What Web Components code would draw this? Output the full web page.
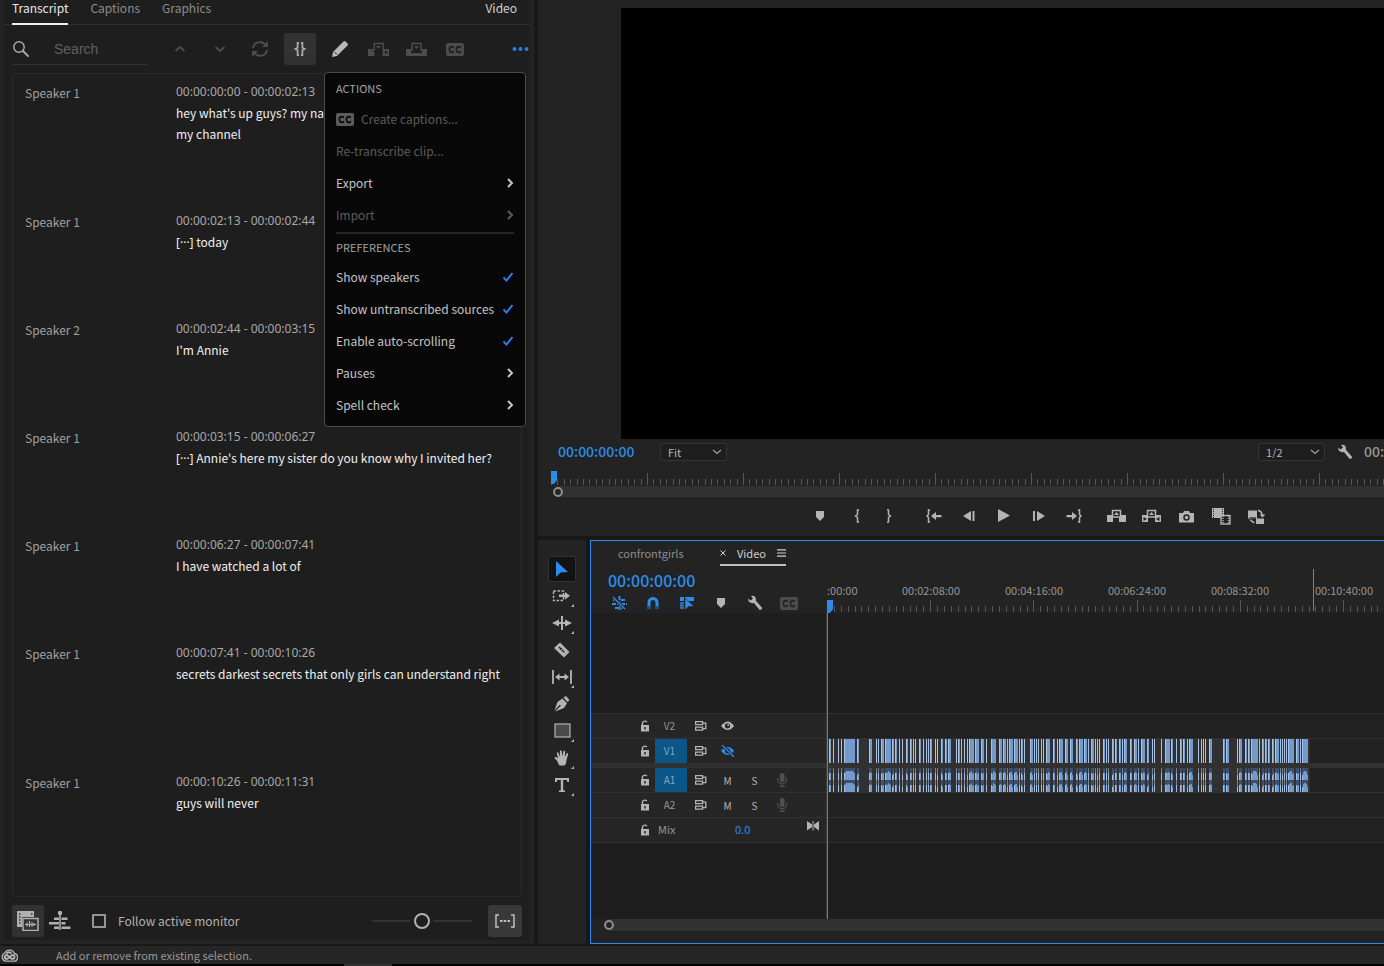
<!DOCTYPE html>
<html lang="en">
<head>
<meta charset="utf-8">
<title>Video editor</title>
<style>
html,body{margin:0;padding:0;background:#181818}
body{font-family:"Noto Sans CJK SC","Noto Sans",sans-serif;font-size:12px;color:#b4b4b4}
</style>
</head>
<body>
<editor-app></editor-app>
<script>
const RESET = `*,*::before,*::after{box-sizing:border-box}
button,input,select{font:inherit;color:inherit;background:none;border:0;margin:0;padding:0;border-radius:0}
button{display:flex;align-items:center;justify-content:center}
:host([hidden]){display:none}`;

function define(name, css, html, setup) {
  const template = document.createElement('template');
  template.innerHTML = `<style>${RESET}${css}</style>${html}`;
  customElements.define(name, class extends HTMLElement {
    constructor() {
      super();
      this.attachShadow({ mode: 'open' }).append(template.content.cloneNode(true));
    }
    connectedCallback() { if (setup) setup(this, this.shadowRoot); }
  });
}

/* Icons: [width, height, markup]; strokes and fills use currentColor. */
const ICONS = {
  search: [18, 18, '<circle cx="7" cy="7" r="5.2" fill="none" stroke="currentColor" stroke-width="1.5"/><path d="M11 11l5 5" stroke="currentColor" stroke-width="2" stroke-linecap="round"/>'],
  up: [12, 8, '<path d="M1.5 6L6 2l4.500 4" fill="none" stroke="currentColor" stroke-width="1.800"/>'],
  down: [12, 8, '<path d="M1.500 2L6 6l4.500-4" fill="none" stroke="currentColor" stroke-width="1.800"/>'],
  caret: [10, 6, '<path d="M1 1l4 3.500L9 1" fill="none" stroke="currentColor" stroke-width="1.200"/>'],
  right: [8, 12, '<path d="M2 2l4 4-4 4" fill="none" stroke="currentColor" stroke-width="2"/>'],
  check: [12, 10, '<path d="M1.500 5.500l3 3L10.500 1" fill="none" stroke="currentColor" stroke-width="2"/>'],
  refresh: [18, 18, '<path d="M2 8a7 7 0 0 1 12.500-3M16 10A7 7 0 0 1 3.500 13" fill="none" stroke="currentColor" stroke-width="2"/><path d="M17 1v6h-6zM1 17v-6h6z" fill="currentColor"/>'],
  braces: [12, 14, '<path d="M5 1H3.600v4.700L1.500 7l2.100 1.300V13H5M7 1h1.400v4.700L10.500 7 8.400 8.300V13H7" fill="none" stroke="currentColor" stroke-width="1.800"/>'],
  pencil: [18, 18, '<path d="M2 12L12.500 1.500q1-1 2 0l2 2q1 1 0 2L6 16l-5 1z" fill="currentColor"/><path d="M3.500 12l2.500 2.500" stroke="#1e1e1e" stroke-width="1"/>'],
  insert: [22, 15, '<path d="M0 7h5V10h10V7h6v7H0z" fill="currentColor"/><path d="M6.200 9V1.500h9V9" fill="none" stroke="currentColor" stroke-width="1.500"/><path d="M8 4h5l-2.500 3z" fill="currentColor"/><path d="M6.500 10h8v5h-8z" fill="var(--back,#1e1e1e)"/><path d="M17 8.500v4l3-2z" fill="var(--back,#1e1e1e)"/>'],
  overwrite: [22, 15, '<path d="M0 7h5V10h11V7h5v7H0z" fill="currentColor"/><path d="M6 9V1.500h9V9" fill="none" stroke="currentColor" stroke-width="1.500"/><path d="M8 4h5l-2.500 3z" fill="currentColor"/><path d="M5 10.500h11" stroke="#1e1e1e" stroke-width="1"/>'],
  cc: [18, 13, '<rect width="18" height="13" rx="2" fill="currentColor"/><path d="M8 4.500Q5.500 2.800 4 4.300q-1.500 2.200 0 4.400Q5.500 10.200 8 8.500M15 4.500Q12.500 2.800 11 4.300q-1.500 2.200 0 4.400 1.500 1.500 4-.2" fill="none" stroke="var(--back,#1e1e1e)" stroke-width="1.700"/>'],
  dots: [17, 6, '<g fill="currentColor"><circle cx="2.500" cy="3" r="2"/><circle cx="8.500" cy="3" r="2"/><circle cx="14.500" cy="3" r="2"/></g>'],
  source: [22, 20, '<path d="M0 0h17v6H5v10H0z" fill="currentColor"/><path d="M2 3h1.500M2 6h1.500M2 9h1.500M2 12h1.500M14 3h1.500" stroke="#323232" stroke-width="1.500"/><rect x="6" y="7.500" width="15" height="12" fill="#323232" stroke="currentColor" stroke-width="1.500"/><path d="M8 13.500h11M10 11.500v4M12.500 10v6M15 11v5M17 12v3" stroke="currentColor" stroke-width="1.200"/>'],
  sequence: [22, 20, '<path d="M11 1v18" stroke="currentColor" stroke-width="1.500"/><circle cx="11" cy="2" r="2.200" fill="currentColor"/><path d="M5 6.500h5V9H5zM12.500 6.500h6V9h-6zM0 11h10v2.500H0zM12.500 11h4v2.500h-4zM5 15.500h5V18H5zM12.500 15.500h9V18h-9z" fill="currentColor"/>'],
  pauses: [20, 14, '<path d="M4 1H1v12h3M16 1h3v12h-3" fill="none" stroke="currentColor" stroke-width="1.500"/><path d="M5 7h2.500M8.700 7h2.500M12.500 7H15" stroke="currentColor" stroke-width="2.200"/>'],
  cloud: [17, 13, '<path d="M5 12.200A4.300 4.300 0 0 1 3.800 4 5.400 5.400 0 0 1 13.500 4.500 3.900 3.900 0 0 1 12.500 12.200z" fill="none" stroke="currentColor" stroke-width="1.300"/><path d="M8 8.500Q5.500 10.800 4 9.200 2.800 6.500 6 6l4.500 3.700q3 .5 3-1.700T11.500 6L8 8.500M5.500 4.500Q8 1.800 10.500 4.500" fill="none" stroke="currentColor" stroke-width="2"/>'],
  wrench: [16, 16, '<path d="M1 3.500l2.500 2L6 3.500 4 1Q8-.5 9 4l-.3 1.500 6.500 7.500q-.5 2-2.500 2L7 8Q1.500 9 1 3.500z" fill="currentColor"/>'],
  marker: [10, 11, '<path d="M1 0h8v6L5 10 1 6z" fill="currentColor"/>'],
  open: [8, 14, '<path d="M6 1H4.500v4.500L2.500 7l2 1.500V13H6" fill="none" stroke="currentColor" stroke-width="1.500"/>'],
  close: [8, 14, '<path d="M2 1h1.500v4.500l2 1.500-2 1.500V13H2" fill="none" stroke="currentColor" stroke-width="1.500"/>'],
  toin: [16, 14, '<path d="M4 1H2.500v4.500L1 7l1.500 1.500V13H4" fill="none" stroke="currentColor" stroke-width="1.500"/><path d="M5 7l5-4v3h5.500v2.200H10V11z" fill="currentColor"/>'],
  toout: [16, 14, '<path d="M12 1h1.500v4.500L15 7l-1.500 1.500V13H12" fill="none" stroke="currentColor" stroke-width="1.500"/><path d="M11 7L6 3v3H.5v2.200H6V11z" fill="currentColor"/>'],
  stepback: [14, 12, '<path d="M9 1v10L1 6zM10.500 1h2v10h-2z" fill="currentColor"/>'],
  stepfwd: [14, 12, '<path d="M5 1v10l8-5zM1 1h2v10H1z" fill="currentColor"/>'],
  play: [14, 14, '<path d="M1 0v13l12-6.500z" fill="currentColor"/>'],
  lift: [20, 14, '<path d="M0 6h6v7H0zM12 6h7v7h-7z" fill="currentColor"/><path d="M5.500 8V1.500h8V8z" fill="#232323" stroke="currentColor" stroke-width="1.500"/><path d="M7 6h5L9.500 3z" fill="currentColor"/>'],
  extract: [20, 14, '<path d="M0 6h6v7H0zM13 6h6v7h-6z" fill="currentColor"/><path d="M5.500 8V1.500h8V8z" fill="#232323" stroke="currentColor" stroke-width="1.500"/><path d="M7 6h5L9.500 3z" fill="currentColor"/><path d="M1.500 8v4L5 10zM17.500 8v4L14 10z" fill="#232323"/>'],
  camera: [15, 13, '<path d="M0 3h4l1-2h5l1 2h4v9.500H0z" fill="currentColor"/><circle cx="7.500" cy="7.500" r="2.500" fill="none" stroke="#232323" stroke-width="1.500"/>'],
  compare: [20, 17, '<path d="M0 0h12v10H0z" fill="currentColor"/><path d="M1.500 1v9M10.500 1v9" stroke="#232323" stroke-width="1" stroke-dasharray="1 1"/><rect x="9" y="7.500" width="9" height="8.500" fill="#232323" stroke="currentColor" stroke-width="1.400"/><path d="M11 8v8M16.500 8v8" stroke="currentColor" stroke-width="1.500" stroke-dasharray="1 1"/>'],
  proxy: [17, 15, '<path d="M0 1.500h9v8H0zM8 9.500h8V15H8z" fill="currentColor"/><path d="M10 1.500q4 .5 4.500 5.500M12.500 5.500l2 2 2-2M6.500 13.500Q3 13 2 9" fill="none" stroke="currentColor" stroke-width="1.400"/><path d="M1 8h7v3H2z" fill="#232323" opacity=".6"/>'],
  select: [14, 18, '<path d="M1 1v16l4.500-4.500L13 12z" fill="currentColor"/>'],
  trackfwd: [20, 14, '<rect x="1.500" y="2" width="10" height="9.500" fill="none" stroke="currentColor" stroke-width="1.500" stroke-dasharray="2.500 1.500"/><path d="M7 5.500h6V3l5 3.700-5 3.800V8H7z" fill="currentColor"/>'],
  ripple: [20, 14, '<path d="M10 0v14" stroke="currentColor" stroke-width="2"/><path d="M7 3.500L0 7l7 3.500zM13 3.500L20 7l-7 3.500z" fill="currentColor"/><path d="M5 7h10" stroke="currentColor" stroke-width="2"/>'],
  razor: [16, 16, '<path d="M0 6l6-5.500L15.500 10 10 15.500z" fill="currentColor"/><path d="M5 5l6 6" stroke="#232323" stroke-width="1.500" stroke-dasharray="3 1"/><path d="M6 8l2-2" stroke="#232323" stroke-width="1"/>'],
  slip: [20, 14, '<path d="M1 0v14M19 0v14M5 7h10" stroke="currentColor" stroke-width="1.800"/><path d="M7.500 3.500v7L3 7zM12.500 3.500v7L17 7z" fill="currentColor"/>'],
  pen: [16, 16, '<path d="M9.500 1.500L12 0l3.500 4-2 2zM8.500 2.500l4.500 4.800L10 12l-7.500 3L1 15.500 7 9.500 5.800 8.800.5 14.500 3.500 6z" fill="currentColor"/>'],
  rect: [17, 15, '<rect x="1" y="1" width="15" height="13" fill="#4a4a4a" stroke="currentColor" stroke-width="1.200"/>'],
  hand: [16, 17, '<path d="M4.500 15Q3 11 .5 9 .5 7.500 2 8l2 1.500L2.800 4Q3.500 2.500 4.500 4L6 8 5.800 2Q7 .5 7.800 2l.4 5.500L9.500 2q1.200-1 1.700.2L10.800 8l2-3.800q1.500-.5 1.400.8L12.500 11 12 14.500 10.500 16.500h-5z" fill="currentColor"/>'],
  type: [16, 16, '<path d="M1 1h14v4h-1.500l-1-2H9.200v10.500H11V15H5v-1.500h1.800V3H3.500l-1 2H1z" fill="currentColor"/>'],
  nest: [15, 14, '<path d="M7.500 0v14M0 8h6M9 4h4M9 8h6M1 4h3M3 12h3M9 12h3" stroke="currentColor" stroke-width="2" stroke-dasharray="4 1"/><path d="M1 1l12 12" stroke="#232323" stroke-width="3"/><path d="M1 1l12 12" stroke="currentColor" stroke-width="1.200"/>'],
  magnet: [14, 14, '<path d="M3 11V6.500a4 4 0 0 1 8 0V11" fill="none" stroke="currentColor" stroke-width="3"/><path d="M1 10h4v3H1zM9 10h4v3H9z" fill="#15568f"/>'],
  linked: [15, 14, '<path d="M0 1h4v4H0zM5 1h9v4H5z" fill="currentColor"/><path d="M4 7H1v5h3M1 9.500h3" fill="none" stroke="currentColor" stroke-width="1.300"/><path d="M5 2v12l3.500-3.500H14z" fill="currentColor" stroke="#232323" stroke-width=".6"/>'],
  lock: [9, 12, '<path d="M0 5h8v6.500H0z" fill="currentColor"/><path d="M1.500 5V2.500Q3.500 0 6 2" fill="none" stroke="currentColor" stroke-width="1.400"/><path d="M4 7v2.500" stroke="#262626" stroke-width="1.500"/>'],
  sync: [12, 10, '<path d="M.6.700h7v3h-7zM.6 6.200h7v3h-7zM7.500 2.200h4M7.500 7.700h4M10.800 2v6" fill="none" stroke="currentColor" stroke-width="1.300"/>'],
  eye: [14, 10, '<path d="M0 5q7-9 13 0-6 8-13 0z" fill="currentColor"/><circle cx="6.500" cy="4.800" r="2.600" fill="#232323"/><circle cx="7.200" cy="4" r="1" fill="currentColor"/>'],
  eyeoff: [14, 12, '<path d="M0 6q7-8 13 0-6 8-13 0z" fill="currentColor"/><circle cx="6.500" cy="6" r="2.500" fill="#232323"/><path d="M1 0l12 12" stroke="#232323" stroke-width="3"/><path d="M1 0l12 12" stroke="currentColor" stroke-width="1.300"/>'],
  mic: [10, 14, '<rect x="3" y="0" width="4.500" height="9" rx="2.200" fill="currentColor"/><path d="M1 5v2.500q.5 3 4.200 3t4.200-3V5M5.200 10.500V13M2.500 13.300h5.500" fill="none" stroke="currentColor" stroke-width="1.200"/>'],
  bowtie: [12, 10, '<path d="M0 0l5 3.500V0h2v3.500L12 0v9.500L7 6v3.500H5V6L0 9.500z" fill="currentColor"/><path d="M6 0v10" stroke="#262626" stroke-width="1"/>'],
  menu: [9, 8, '<path d="M0 .8h9M0 4h9M0 7.200h9" stroke="currentColor" stroke-width="1.200"/>'],
  x: [6, 6, '<path d="M.5.500l5 5M5.500.500l-5 5" stroke="currentColor" stroke-width="1"/>'],
  ring: [12, 12, '<circle cx="6" cy="6" r="3.900" fill="#232323" stroke="currentColor" stroke-width="2"/>'],
  head: [7, 13, '<path d="M0 0h6v9l-3 4H0z" fill="currentColor"/>'],
  corner: [3, 3, '<path d="M3 0v3H0z" fill="currentColor"/>']
};

customElements.define('ui-icon', class extends HTMLElement {
  constructor() {
    super();
    const [w, h, body] = ICONS[this.getAttribute('name')] || [1, 1, ''];
    this.attachShadow({ mode: 'open' }).innerHTML =
      `<style>:host{display:block;flex:none;line-height:0}svg{display:block}</style><svg width="${w}" height="${h}" viewBox="0 0 ${w} ${h}" aria-hidden="true">${body}</svg>`;
  }
});

const attr = (host, root, names) => names.forEach(n => {
  root.querySelectorAll(`[data-${n}]`).forEach(el => { el.textContent = host.getAttribute(n) || ''; });
});

/* ---------- Transcript panel ---------- */
define('transcript-row', `
:host{display:flex;min-height:108px;padding:8px 12px 0;font-size:12px;line-height:21px}
:host([tall]){min-height:129px}
.who{flex:0 0 151px;color:#a0a0a0}
.what{flex:1;min-width:0;color:#f0f0f0;white-space:nowrap}
.time{font:12px/20px "Noto Sans",sans-serif;color:#a8a8a8}`,
`<div class="who" data-speaker></div><div class="what"><div class="time" data-time></div><slot></slot></div>`,
(h, r) => attr(h, r, ['speaker', 'time']));

define('menu-item', `
:host{display:block}
button{width:100%;height:32px;justify-content:flex-start;gap:7px;color:#c4c4c4;white-space:nowrap;--back:#080808}
button:disabled{color:#5c5c5c}
span{flex:1;text-align:left;padding-bottom:2px}
.check{color:#2680eb}`,
`<button role="menuitem"><slot name="lead"></slot><span><slot></slot></span></button>`,
(h, r) => {
  const b = r.querySelector('button');
  b.disabled = h.hasAttribute('disabled');
  const kind = h.getAttribute('end');
  if (kind) {
    const i = document.createElement('template');
    i.innerHTML = `<ui-icon name="${kind}" class="${kind}"></ui-icon>`;
    b.append(i.content);
  }
});

define('options-menu', `
:host{display:block;width:202px;padding:2px 11px 5px;background:#080808;border:1px solid #4a4a4a;border-radius:4px}
h2{margin:0;padding-bottom:2px;font-size:11px;font-weight:400;line-height:26px;color:#a4a4a4}
hr{margin:1px 0;border:0;height:2px;background:#262626}
.second{line-height:24px}`,
`<h2>ACTIONS</h2>
<menu-item disabled><ui-icon slot="lead" name="cc"></ui-icon>Create captions...</menu-item>
<menu-item disabled>Re-transcribe clip...</menu-item>
<menu-item end="right">Export</menu-item>
<menu-item end="right" disabled>Import</menu-item>
<hr>
<h2 class="second">PREFERENCES</h2>
<menu-item end="check">Show speakers</menu-item>
<menu-item end="check">Show untranscribed sources</menu-item>
<menu-item end="check">Enable auto-scrolling</menu-item>
<menu-item end="right">Pauses</menu-item>
<menu-item end="right">Spell check</menu-item>`);

define('transcript-panel', `
:host{display:flex;flex-direction:column;padding:0 4px 4px;background:#232323;min-width:0}
.body{flex:1;display:flex;flex-direction:column;background:#1e1e1e;padding:0 8px 3px}
nav{display:flex;gap:22px;height:25px;margin:0 -8px;padding:0 13px 0 8px;border-bottom:1px solid #303030}
nav button{height:25px;padding-bottom:10px;color:#8c8c8c;font-size:12px}
nav .on{color:#e6e6e6;border-bottom:2px solid #f0f0f0;padding-bottom:8px}
nav .right{margin-left:auto;color:#d0d0d0}
.bar{position:relative;display:flex;align-items:center;height:32px;margin-top:8px}
.find{display:flex;align-items:center;width:136px;height:32px;margin-right:12px;color:#a8a8a8;border-bottom:1px solid #323232}
.find input{width:80px;height:20px;margin-left:24px;font:14px "Liberation Sans",sans-serif;outline:0}
input::placeholder{color:#606060;opacity:1}
.bar button{width:38px;height:32px;color:#4c4c4c}
.bar .w{width:40px}
.bar .on{width:32px;margin:0 4px;background:#323232;border-radius:3px;color:#a8a8a8}
.bar .pen{color:#b8b8b8}
.bar .more{width:17px;margin-left:auto;margin-right:-7px;color:#2680eb}
options-menu{position:absolute;top:39px;right:-4px;z-index:2}
.list{flex:1;margin-top:8px;border:1px solid #2a2a2a;border-radius:4px}
.gap{font-family:"Noto Sans",sans-serif}
footer{display:flex;align-items:center;height:32px;margin-top:8px;color:#b0b0b0}
footer .tile{width:32px;height:32px;border-radius:3px}
footer .on{background:#323232}
footer .pauses{width:34px;background:#393939;color:#c0c0c0;margin-left:16px}
label{display:flex;align-items:center;gap:12px;margin-left:16px;font-size:12px}
label span{padding-bottom:2px}
input[type=checkbox]{appearance:none;width:14px;height:14px;border:2px solid #969696;border-radius:1px}
input[type=range]{appearance:none;width:100px;height:16px;margin-left:auto;background:linear-gradient(#323232,#323232) center/100% 2px no-repeat}
input[type=range]::-webkit-slider-thumb{appearance:none;width:16px;height:16px;border:2px solid #b0b0b0;border-radius:50%;background:#1e1e1e;box-shadow:0 0 0 4px #1e1e1e}`,
`<div class="body">
<nav><button class="on">Transcript</button><button>Captions</button><button>Graphics</button><button class="right">Video</button></nav>
<div class="bar">
<div class="find"><ui-icon name="search"></ui-icon><input type="text" placeholder="Search" aria-label="Search"></div>
<button class="w" aria-label="Previous"><ui-icon name="up"></ui-icon></button>
<button class="w" aria-label="Next"><ui-icon name="down"></ui-icon></button>
<button class="w" aria-label="Replace"><ui-icon name="refresh"></ui-icon></button>
<button class="on" aria-label="Merge segments"><ui-icon name="braces"></ui-icon></button>
<button class="pen w" aria-label="Edit"><ui-icon name="pencil"></ui-icon></button>
<button aria-label="Insert"><ui-icon name="insert"></ui-icon></button>
<button aria-label="Overwrite"><ui-icon name="overwrite"></ui-icon></button>
<button aria-label="Captions"><ui-icon name="cc"></ui-icon></button>
<button class="more" aria-label="More"><ui-icon name="dots"></ui-icon></button>
<options-menu role="menu"></options-menu>
</div>
<div class="list">
<transcript-row tall speaker="Speaker 1" time="00:00:00:00 - 00:00:02:13">hey what's up guys? my na<br>my channel</transcript-row>
<transcript-row speaker="Speaker 1" time="00:00:02:13 - 00:00:02:44"><span class="gap">[···]</span> today</transcript-row>
<transcript-row speaker="Speaker 2" time="00:00:02:44 - 00:00:03:15">I'm Annie</transcript-row>
<transcript-row speaker="Speaker 1" time="00:00:03:15 - 00:00:06:27"><span class="gap">[···]</span> Annie's here my sister do you know why I invited her?</transcript-row>
<transcript-row speaker="Speaker 1" time="00:00:06:27 - 00:00:07:41">I have watched a lot of</transcript-row>
<transcript-row tall speaker="Speaker 1" time="00:00:07:41 - 00:00:10:26">secrets darkest secrets that only girls can understand right</transcript-row>
<transcript-row speaker="Speaker 1" time="00:00:10:26 - 00:00:11:31">guys will never</transcript-row>
</div>
<footer>
<button class="tile on" aria-label="Source"><ui-icon name="source"></ui-icon></button>
<button class="tile" aria-label="Sequence"><ui-icon name="sequence"></ui-icon></button>
<label><input type="checkbox"><span>Follow active monitor</span></label>
<input type="range" aria-label="Text size" value="50">
<button class="tile pauses" aria-label="Show pauses"><ui-icon name="pauses"></ui-icon></button>
</footer>
</div>`);

/* ---------- Rulers ---------- */
/* Fifteen divisions to a period; the first of each is a tall tick. */
define('time-ruler', `
:host{display:block;height:12px;overflow:hidden}
svg{display:block;width:100%;height:12px}`,
`<svg fill="#565656"></svg>`,
(h, r) => {
  const period = Number(h.getAttribute('period'));
  let out = '';
  for (let i = 0; i < 450; i++) {
    const major = i % 15 === 0;
    out += `<rect x="${Math.round(i * period / 15)}" y="${major ? 0 : 6}" width="1" height="${major ? 12 : 6}"/>`;
  }
  r.querySelector('svg').innerHTML = out;
});

define('zoom-bar', `
:host{display:flex;align-items:center;height:11px;color:#909090;--bar:#323232}
i{flex:1;height:100%;margin-left:-6px;background:var(--bar)}
ui-icon{position:relative}`,
`<ui-icon name="ring"></ui-icon><i></i>`);

/* ---------- Program monitor ---------- */
define('program-monitor', `
:host{display:flex;flex-direction:column;background:#232323;height:536px;overflow:hidden}
.view{height:431px;margin:8px 0 0 83px;background:#000}
.info{display:flex;align-items:center;height:25px;padding-left:20px}
.tc{flex:none;width:102px;padding-bottom:2px;font-size:14px;font-weight:500;color:#2d8ceb}
.drop{position:relative;flex:none;display:flex;align-items:center}
select{appearance:none;width:67px;height:18px;padding:0 7px 2px;font-size:11px;color:#b8b8b8;background:#1e1e1e;border:1px solid #343434;border-radius:2px}
.drop ui-icon{position:absolute;right:5px;color:#a0a0a0}
.res{margin-left:auto}
.wrench{margin:0 11px 0 12px;color:#b4b4b4}
.dur{width:20px;padding-bottom:2px;font-size:14px;font-weight:500;color:#969696;white-space:nowrap;overflow:hidden}
.rule{position:relative;height:14px;margin:8px 0 0 14px}
.rule time-ruler{padding-top:1px;margin-left:-1px;height:13px}
.rule ui-icon{position:absolute;left:-1px;top:-1px;color:#2d8ceb}
zoom-bar{margin-left:14px}
.keys{display:flex;align-items:center;height:38px;padding-left:266px;color:#b4b4b4}
.keys div{display:flex}
.keys button{width:35px;height:24px}
.keys .n button{width:32px}
.keys div+div{margin-left:8px}
.keys .n+.n{margin-left:5px}
.keys .n+.move{margin-left:11px}`,
`<div class="view"></div>
<div class="info"><div class="tc">00:00:00:00</div>
<div class="drop"><select aria-label="Zoom level"><option>Fit</option></select><ui-icon name="caret"></ui-icon></div>
<div class="drop res"><select aria-label="Playback resolution"><option>1/2</option></select><ui-icon name="caret"></ui-icon></div>
<button class="wrench" aria-label="Settings"><ui-icon name="wrench"></ui-icon></button>
<div class="dur">00:</div></div>
<div class="rule"><time-ruler period="96"></time-ruler><ui-icon name="head"></ui-icon></div>
<zoom-bar></zoom-bar>
<div class="keys">
<div class="n"><button aria-label="Add marker"><ui-icon name="marker"></ui-icon></button></div>
<div class="n"><button aria-label="Mark in"><ui-icon name="open"></ui-icon></button><button aria-label="Mark out"><ui-icon name="close"></ui-icon></button></div>
<div class="move"><button aria-label="Go to in"><ui-icon name="toin"></ui-icon></button><button aria-label="Step back"><ui-icon name="stepback"></ui-icon></button><button aria-label="Play"><ui-icon name="play"></ui-icon></button><button aria-label="Step forward"><ui-icon name="stepfwd"></ui-icon></button><button aria-label="Go to out"><ui-icon name="toout"></ui-icon></button></div>
<div><button aria-label="Lift"><ui-icon name="lift"></ui-icon></button><button aria-label="Extract"><ui-icon name="extract"></ui-icon></button><button aria-label="Export frame"><ui-icon name="camera"></ui-icon></button><button aria-label="Comparison view"><ui-icon name="compare"></ui-icon></button><button aria-label="Toggle proxies"><ui-icon name="proxy"></ui-icon></button></div>
</div>`);

/* ---------- Tool palette ---------- */
define('tool-button', `
:host{display:block}
button{position:relative;width:28px;height:27px;color:#b4b4b4}
:host([on]) button{background:#131313;border:1px solid #333;border-radius:2px;color:#2d8ceb;height:26px}
.c{position:absolute;right:2px;bottom:2px}`,
`<button><slot></slot></button>`,
(h, r) => {
  const b = r.querySelector('button');
  b.setAttribute('aria-label', h.getAttribute('label'));
  if (h.hasAttribute('more')) {
    const t = document.createElement('template');
    t.innerHTML = '<ui-icon class="c" name="corner"></ui-icon>';
    b.append(t.content);
  }
});

define('tool-palette', `
:host{display:flex;flex-direction:column;align-items:center;padding-top:16px;background:#232323}`,
[['select', 'Selection', 'on'], ['trackfwd', 'Track select', 'more'], ['ripple', 'Ripple edit', 'more'], ['razor', 'Razor', ''], ['slip', 'Slip', 'more'], ['pen', 'Pen', ''], ['rect', 'Rectangle', 'more'], ['hand', 'Hand', 'more'], ['type', 'Type', 'more']]
  .map(([i, l, f]) => `<tool-button label="${l}" ${f}><ui-icon name="${i}"></ui-icon></tool-button>`).join(''));

/* ---------- Timeline ---------- */
/* Clip extents as start, end pairs in thirds of a pixel at the current zoom. */
const CLIPS = [27,33,39,42,54,57,63,66,72,105,111,117,147,156,168,171,174,177,183,192,195,213,216,222,225,231,237,240,246,249,258,264,270,276,279,282,285,288,297,303,309,312,318,321,324,327,330,336,345,348,351,354,363,369,375,381,384,393,408,411,414,420,423,426,432,435,441,444,447,462,465,477,483,492,498,501,513,528,537,546,549,558,561,564,567,579,582,594,597,600,603,609,612,615,630,639,642,645,648,651,654,657,663,666,669,672,678,690,699,705,711,714,717,729,735,744,750,759,768,774,777,789,792,801,804,807,813,822,825,828,831,834,837,840,849,855,858,861,864,867,876,882,885,891,897,903,906,909,912,921,930,936,942,951,954,957,963,975,981,987,996,999,1002,1005,1023,1026,1035,1050,1053,1059,1068,1071,1080,1086,1089,1095,1101,1104,1107,1119,1134,1137,1143,1146,1149,1152,1155,1158,1167,1176,1209,1215,1218,1227,1251,1254,1257,1266,1275,1281,1284,1290,1293,1314,1317,1320,1326,1332,1335,1341,1344,1350,1356,1362,1365,1377,1380,1383,1386,1389,1392,1395,1398,1401,1404,1422,1428,1437,1440,1443,1446,1464];

define('clip-strip', `
:host{display:block;width:483px;height:24px;background:#313131}
svg{display:block}`,
`<svg width="483" height="24" shape-rendering="crispEdges"></svg>`,
(h, r) => {
  const audio = h.hasAttribute('audio');
  let out = '';
  for (let i = 0; i < CLIPS.length; i += 2) {
    const x = (CLIPS[i] - 21) / 3, w = (CLIPS[i + 1] - CLIPS[i]) / 3;
    out += `<rect x="${x}" width="${w}" height="24" fill="${audio ? (w > 1 ? '#3b506d' : '#78808a') : '#729acc'}"/>`;
    if (audio) {
      for (let k = 0; k < w; k++) {
        const edge = Math.min(k, w - 1 - k);
        const top = Math.max(3, 5 - edge) + ((x + k) * 7 % 5 === 0 && w < 9 ? 2 : 0);
        out += `<path d="M${x + k} ${top}h1V12h-1zM${x + k} ${12 + top}h1V24h-1z" fill="${k ? '#729acc' : '#a3bde0'}"/>`;
      }
    } else {
      out += `<rect x="${x}" width="1" height="24" fill="#a9c1e2"/>`;
    }
  }
  r.querySelector('svg').innerHTML = out;
});

define('timeline-track', `
:host{display:grid;grid-template-columns:236px minmax(0,1fr);height:25px;border-bottom:1px solid #313131;background:#212121}
:host([last]){border-bottom:0;height:24px}
.head{display:flex;align-items:center;background:#262626;padding-left:50px;color:#b4b4b4;font-size:10px}
.head button{width:27px;height:24px}
.head .lock{width:8px;margin-right:6px}
.head .target{width:32px;padding:0 3px 2px 0;color:#969696}
:host([on]) .target{background:#0a5688;color:#8aa4b8}
.head .eyeoff{color:#2d8ceb}
.mic{color:#505050}
.name{margin-left:3px;padding-bottom:2px;font-size:11px;color:#969696;width:77px}
.num{padding-bottom:3px;font-size:11px;color:#2d8ceb}
.end{margin-left:auto;padding:0 8px 8px 0}`,
`<div class="head"></div><div class="lane"><slot></slot></div>`,
(h, r) => {
  const name = h.getAttribute('name'), kind = h.getAttribute('kind');
  const ic = (i, c = '') => `<button class="${c}" aria-label="${i}"><ui-icon name="${i}"></ui-icon></button>`;
  let out = ic('lock', 'lock');
  if (kind === 'mix') out += `<span class="name">${name}</span><span class="num">0.0</span><span class="end"><ui-icon name="bowtie"></ui-icon></span>`;
  else {
    out += `<button class="target">${name}</button>` + ic('sync');
    out += kind === 'audio' ? '<button>M</button><button>S</button>' + ic('mic', 'mic') : ic(kind, kind);
  }
  r.querySelector('.head').innerHTML = out;
});

define('timeline-panel', `
:host{display:flex;flex-direction:column;border:1px solid #2d8ceb;border-right:0;background:#232323;min-width:0;overflow:hidden;font-size:11px}
.top{display:grid;grid-template-columns:236px minmax(0,1fr);height:72px}
.side{white-space:nowrap}
.tabs{display:flex;align-items:center;height:25px;padding-left:27px}
.tabs button{height:25px;color:#8c8c8c}
.tabs .off{width:61px;padding-bottom:2px;justify-content:flex-start}
.tabs .on{gap:11px;width:66px;margin-left:41px;justify-content:flex-start;color:#d0d0d0;border-bottom:2px solid #c0c0c0}
.tabs .on ui-icon:last-child{margin-left:auto}
.tc{padding:0 0 2px 17px;font-size:16px;font-weight:500;line-height:28px;color:#2d8ceb}
.opts{display:flex;padding-left:11px;color:#b4b4b4;--back:#232323}
.opts button{width:34px;height:14px}
.opts .b{color:#2d8ceb}
.opts .d{color:#4c4c4c}
.ruler{position:relative;align-self:end;height:44px;overflow:hidden}
.ruler time-ruler{position:absolute;left:0;right:0;bottom:1px}
.ruler ui-icon{position:absolute;left:0;bottom:0;color:#2d8ceb}
.ruler span{position:absolute;top:13px;line-height:16px;color:#969696;transform:translateX(-50%)}
.ruler .first{left:0;transform:none}
.out{position:absolute;left:486px;top:0;bottom:2px;width:1px;background:#808080}
.tracks{position:relative;flex:1;background:#1e1e1e;padding-top:100px}
.tracks::before{content:"";display:block;height:1px;background:#313131}
.split{height:5px;background:#313131}
.play{position:absolute;left:236px;top:0;bottom:0;width:1px;background:#2d8ceb;box-shadow:-1px 0 #3a3a3a}
.edge{display:flex;height:24px}
zoom-bar{flex:1;height:12px;padding-left:12px}`,
`<div class="top"><div class="side">
<div class="tabs"><button class="off">confrontgirls</button><button class="on"><ui-icon name="x"></ui-icon>Video<ui-icon name="menu"></ui-icon></button></div>
<div class="tc">00:00:00:00</div>
<div class="opts"><button class="b" aria-label="Nest"><ui-icon name="nest"></ui-icon></button><button class="b" aria-label="Snap"><ui-icon name="magnet"></ui-icon></button><button class="b" aria-label="Linked selection"><ui-icon name="linked"></ui-icon></button><button aria-label="Marker"><ui-icon name="marker"></ui-icon></button><button aria-label="Settings"><ui-icon name="wrench"></ui-icon></button><button class="d" aria-label="Captions"><ui-icon name="cc"></ui-icon></button></div>
</div>
<div class="ruler"><time-ruler period="103.200"></time-ruler><div class="out"></div><ui-icon name="head"></ui-icon>
<span class="first">:00:00</span><span style="left:104px">00:02:08:00</span><span style="left:207px">00:04:16:00</span><span style="left:310px">00:06:24:00</span><span style="left:413px">00:08:32:00</span><span style="left:517px">00:10:40:00</span></div>
</div>
<div class="tracks">
<timeline-track name="V2" kind="eye"></timeline-track>
<timeline-track name="V1" kind="eyeoff" on last><clip-strip></clip-strip></timeline-track>
<div class="split"></div>
<timeline-track name="A1" kind="audio" on><clip-strip audio></clip-strip></timeline-track>
<timeline-track name="A2" kind="audio"></timeline-track>
<timeline-track name="Mix" kind="mix"></timeline-track>
<div class="play"></div>
</div>
<div class="edge"><zoom-bar></zoom-bar></div>`);

/* ---------- Frame ---------- */
define('status-bar', `
:host{display:flex;align-items:center;gap:38px;height:18px;padding-left:1px;background:#262626;font-size:11px;color:#969696}
ui-icon{color:#b4b4b4}`,
`<ui-icon name="cloud"></ui-icon><span><slot></slot></span>`);

define('editor-app', `
:host{display:flex;flex-direction:column;min-height:100vh;background:#181818}
main{flex:1;display:grid;grid-template-columns:minmax(0,534fr) minmax(0,846fr);gap:4px}
.right{display:flex;flex-direction:column;gap:4px;min-width:0}
.lower{flex:1;display:grid;grid-template-columns:48px minmax(0,1fr);gap:4px}
status-bar{margin-top:2px}
.foot{height:2px;background:#000}
.foot i{display:block;width:48px;height:2px;margin-left:344px;background:#333}`,
`<main><transcript-panel></transcript-panel>
<div class="right"><program-monitor></program-monitor><div class="lower"><tool-palette></tool-palette><timeline-panel></timeline-panel></div></div></main>
<status-bar>Add or remove from existing selection.</status-bar><div class="foot"><i></i></div>`);
</script>
</body>
</html>
